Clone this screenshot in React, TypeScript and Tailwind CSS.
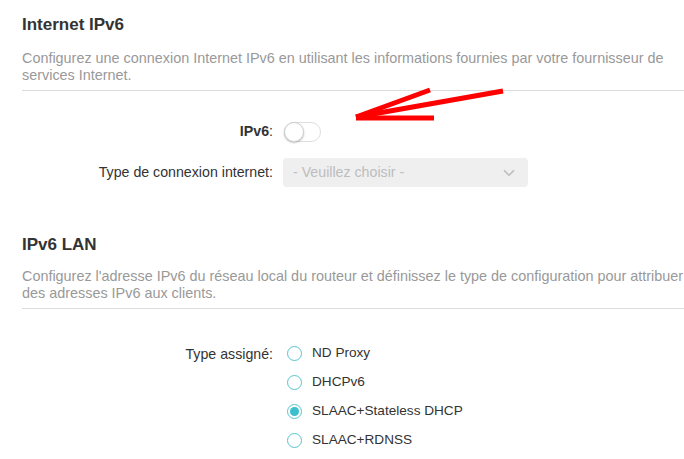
import { ChevronDown } from "lucide-react";

const font = { fontFamily: '"Liberation Sans", Arial, sans-serif' };

const Section = ({ title, desc, gap }: { title: string; desc: string; gap: string }) => (
  <div>
    <h2 className="text-[17px] font-bold leading-[20px] text-[#333]">{title}</h2>
    <p className={`${gap} text-[14.4px] leading-[16.5px] text-[#999]`}>{desc}</p>
  </div>
);

const Radio = ({ label, checked }: { label: string; checked?: boolean }) => (
  <label className="flex h-[29px] items-center gap-[10px] text-[13.6px] text-[#333]">
    <span className="ml-[4px] flex h-[15px] w-[15px] items-center justify-center rounded-full border border-[#56c6d0] bg-white">
      {checked && <span className="h-[9px] w-[9px] rounded-full bg-[#3bbfca]" />}
    </span>
    {label}
  </label>
);

export default function App() {
  return (
    <div className="relative h-[459px] w-[684px] overflow-hidden bg-white pl-[22px]" style={font}>
      <div className="pt-[15px]">
        <Section
          gap="mt-[15px]"
          title="Internet IPv6"
          desc="Configurez une connexion Internet IPv6 en utilisant les informations fournies par votre fournisseur de services Internet."
        />
        <div className="mt-[7px] h-px bg-[#dcdcdc]" />

        <div className="mt-[31px] flex h-[20px] items-center">
          <div className="w-[251px] text-right text-[14.2px] text-[#333]">
            <span className="font-bold">IPv6</span>:
          </div>
          <div className="ml-[11px] flex h-[20px] w-[37px] items-center rounded-full border border-[#dedede] bg-white">
            <span className="h-[20px] w-[20px] -ml-px rounded-full border border-[#d0d0d0] bg-white shadow-[0_1px_2px_rgba(0,0,0,0.25)]" />
          </div>
        </div>

        <div className="mt-[16px] flex h-[29px] items-center">
          <div className="w-[251px] text-right text-[14.2px] text-[#333]">Type de connexion internet:</div>
          <div className="ml-[10px] flex h-[29px] w-[245px] items-center justify-between rounded-[4px] bg-[#efefef] pl-[10px] pr-[10px] text-[14.2px] text-[#bdbdbd]">
            <span>- Veuillez choisir -</span>
            <ChevronDown size={18} strokeWidth={2.2} className="text-[#bdbdbd]" />
          </div>
        </div>
      </div>

      <div className="mt-[48px]">
        <Section
          gap="mt-[13px]"
          title="IPv6 LAN"
          desc="Configurez l'adresse IPv6 du réseau local du routeur et définissez le type de configuration pour attribuer des adresses IPv6 aux clients."
        />
        <div className="mt-[7px] h-px bg-[#dcdcdc]" />

        <div className="mt-[30px] flex">
          <div className="w-[251px] pt-[5px] text-right text-[14.2px] text-[#333]">Type assigné:</div>
          <div className="ml-[10px] flex flex-col">
            <Radio label="ND Proxy" />
            <Radio label="DHCPv6" />
            <Radio label="SLAAC+Stateless DHCP" checked />
            <Radio label="SLAAC+RDNSS" />
          </div>
        </div>
      </div>

      <svg className="pointer-events-none absolute left-0 top-0" width="684" height="459">
        <g stroke="#f00" strokeWidth="5" fill="none" strokeLinecap="butt">
          <line x1="356" y1="117" x2="430" y2="90" />
          <line x1="356" y1="117" x2="503" y2="91" />
          <line x1="356" y1="118" x2="434" y2="118" />
        </g>
      </svg>
    </div>
  );
}
